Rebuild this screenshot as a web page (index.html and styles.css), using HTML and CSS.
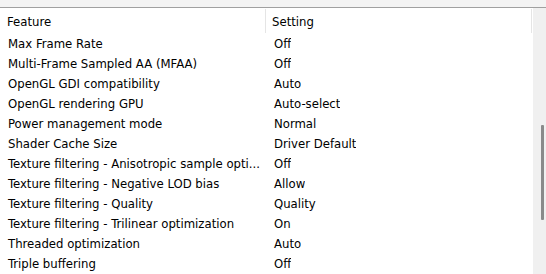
FILE: index.html
```html
<!DOCTYPE html>
<html>
<head>
<meta charset="utf-8">
<link rel="stylesheet" href="styles.css">
</head>
<body>
<div class="window">
  <div class="topstrip"></div>
  <div class="content">
    <div class="list">
      <div class="header">
        <div class="hcell c1">Feature</div>
        <div class="hcell c2">Setting</div>
      </div>
      <div class="rows">
        <div class="row"><span class="cell c1">Max Frame Rate</span><span class="cell c2">Off</span></div>
        <div class="row"><span class="cell c1">Multi-Frame Sampled AA (MFAA)</span><span class="cell c2">Off</span></div>
        <div class="row"><span class="cell c1">OpenGL GDI compatibility</span><span class="cell c2">Auto</span></div>
        <div class="row"><span class="cell c1">OpenGL rendering GPU</span><span class="cell c2">Auto-select</span></div>
        <div class="row"><span class="cell c1">Power management mode</span><span class="cell c2">Normal</span></div>
        <div class="row"><span class="cell c1">Shader Cache Size</span><span class="cell c2">Driver Default</span></div>
        <div class="row"><span class="cell c1">Texture filtering - Anisotropic sample opti...</span><span class="cell c2">Off</span></div>
        <div class="row"><span class="cell c1">Texture filtering - Negative LOD bias</span><span class="cell c2">Allow</span></div>
        <div class="row"><span class="cell c1">Texture filtering - Quality</span><span class="cell c2">Quality</span></div>
        <div class="row"><span class="cell c1">Texture filtering - Trilinear optimization</span><span class="cell c2">On</span></div>
        <div class="row"><span class="cell c1">Threaded optimization</span><span class="cell c2">Auto</span></div>
        <div class="row"><span class="cell c1">Triple buffering</span><span class="cell c2">Off</span></div>
      </div>
    </div>
    <div class="scrollbar"><div class="thumb"></div></div>
  </div>
</div>
</body>
</html>
```
FILE: styles.css
```css
html, body {
  margin: 0;
  padding: 0;
  background: #ffffff;
}
.window {
  width: 546px;
  height: 274px;
  overflow: hidden;
  font-family: "DejaVu Sans Condensed", "DejaVu Sans", sans-serif;
  font-size: 13px;
  color: #000000;
  display: flex;
  flex-direction: column;
}
.topstrip {
  height: 7px;
  background: #f3f3f3;
  border-bottom: 1px solid #a0a0a0;
  flex: none;
}
.content {
  flex: 1;
  display: flex;
  min-height: 0;
}
.list {
  width: 533px;
  background: #ffffff;
  display: flex;
  flex-direction: column;
}
.header {
  height: 25px;
  display: flex;
  align-items: stretch;
  padding-top: 1px;
  box-sizing: border-box;
}
.hcell {
  display: flex;
  align-items: center;
  border-right: 1px solid #e5e5e5;
  box-sizing: border-box;
  height: 24px;
}
.hcell.c1 {
  width: 266px;
  padding-left: 7px;
}
.hcell.c2 {
  width: 266px;
  padding-left: 6px;
}
.rows {
  display: flex;
  flex-direction: column;
}
.row {
  height: 20px;
  line-height: 21px;
  display: flex;
  align-items: flex-start;
}
.cell {
  white-space: nowrap;
  overflow: hidden;
}
.cell.c1 {
  width: 266px;
  padding-left: 8px;
  box-sizing: border-box;
}
.cell.c2 {
  padding-left: 8px;
}
.scrollbar {
  width: 13px;
  background: #f0f0f0;
  position: relative;
}
.thumb {
  position: absolute;
  left: 8px;
  top: 117px;
  width: 3px;
  height: 95px;
  background: #8a8a8a;
  border-radius: 1px;
}
```
